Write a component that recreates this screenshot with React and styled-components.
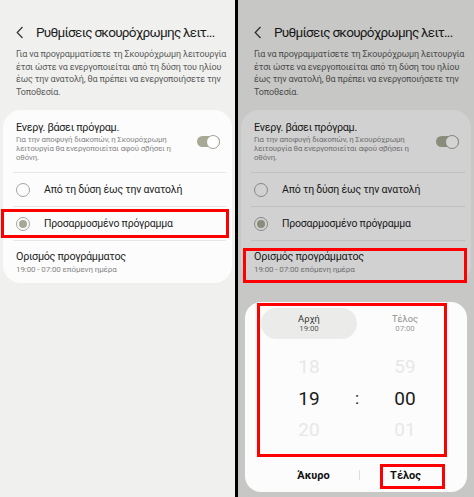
import React from "react";
import styled, { createGlobalStyle } from "styled-components";

const Global = createGlobalStyle`
  html, body { margin: 0; padding: 0; }
  body {
    width: 474px;
    height: 497px;
    overflow: hidden;
    background: #000;
    font-family: Roboto, "Noto Sans", "DejaVu Sans", sans-serif;
  }
`;

const Screen = styled.div`
  display: flex;
  gap: 3px;
  width: 474px;
  height: 497px;
  background: #000;
`;

const Phone = styled.div`
  position: relative;
  isolation: isolate;
  width: ${(p) => p.$w}px;
  flex: none;
  height: 100%;
  background: #f0f0ee;
  display: flex;
  flex-direction: column;
  overflow: hidden;
`;

const Scrim = styled.div`
  position: absolute;
  inset: 0;
  background: rgba(0, 0, 0, 0.17);
  z-index: 1;
`;

const Header = styled.div`
  display: flex;
  align-items: center;
  gap: 12px;
  height: 22px;
  margin: 21px 0 0 16px;
  svg { flex: none; }
`;

const Title = styled.h1`
  margin: 0;
  font-size: 13.6px;
  letter-spacing: -0.75px;
  font-weight: 400;
  color: #1e1e1e;
  white-space: nowrap;
`;

const Description = styled.p`
  margin: 5px 0 0 16px;
  font-size: 9px;
  letter-spacing: -0.15px;
  line-height: 12.5px;
  color: #5a5a5a;
  white-space: nowrap;
`;

const Card = styled.div`
  margin: 12px 3px 0;
  background: #fcfcfc;
  border-radius: 18px;
  padding-top: 11px;
`;

const TopRow = styled.div`
  display: flex;
  align-items: center;
  justify-content: space-between;
  padding: 0 12px 10px 13px;
`;

const TextCol = styled.div`
  display: flex;
  flex-direction: column;
`;

const ItemTitle = styled.div`
  font-size: 10.8px;
  letter-spacing: -0.3px;
  line-height: 14px;
  color: #1e1e1e;
  white-space: nowrap;
`;

const ItemSub = styled.div`
  font-size: ${(p) => p.$fs || 7.8}px;
  letter-spacing: -0.1px;
  line-height: ${(p) => p.$lh || 9}px;
  color: #858585;
  white-space: nowrap;
`;

const Toggle = styled.div`
  position: relative;
  width: 23px;
  height: 11px;
  border-radius: 6px;
  background: #a8aa96;
  flex: none;
`;

const Thumb = styled.div`
  position: absolute;
  right: 0;
  top: 50%;
  transform: translateY(-50%);
  width: 14px;
  height: 14px;
  box-sizing: border-box;
  border-radius: 50%;
  background: #fff;
  border: 1.6px solid #a2a492;
`;

const Divider = styled.div`
  height: 1px;
  background: #e7e7e5;
  margin: 0 6px 0 10px;
`;

const RadioRow = styled.div`
  position: relative;
  display: flex;
  align-items: center;
  gap: 14px;
  height: 33px;
  padding-left: 13px;
`;

const Radio = styled.div`
  width: 14px;
  height: 14px;
  box-sizing: border-box;
  border-radius: 50%;
  border: 1.4px solid #a3a3a3;
  display: flex;
  align-items: center;
  justify-content: center;
  flex: none;
  &::after {
    content: "";
    width: 8px;
    height: 8px;
    border-radius: 50%;
    background: ${(p) => (p.$on ? "#a6a895" : "transparent")};
  }
`;

const RadioLabel = styled.span`
  font-size: 10.5px;
  letter-spacing: -0.2px;
  color: #1e1e1e;
  white-space: nowrap;
`;

const ScheduleRow = styled.div`
  position: relative;
  padding: 9px 0 8px 13px;
  display: flex;
  flex-direction: column;
`;

const Highlight = styled.div`
  position: absolute;
  inset: ${(p) => p.$inset};
  border: 3px solid #ff0000;
  z-index: 3;
  pointer-events: none;
`;

const Sheet = styled.div`
  position: relative;
  z-index: 2;
  margin: 19px 7px 0;
  height: 190px;
  background: #fcfcfc;
  border-radius: 16px;
  display: flex;
  flex-direction: column;
`;

const PickerArea = styled.div`
  position: relative;
  padding-top: 6px;
  height: 144px;
`;

const Tabs = styled.div`
  display: grid;
  grid-template-columns: 96px 96px;
  padding-left: 16px;
`;

const Tab = styled.div`
  height: 31px;
  border-radius: 16px;
  background: ${(p) => (p.$active ? "#ebebe9" : "transparent")};
  display: flex;
  flex-direction: column;
  align-items: center;
  justify-content: center;
`;

const TabLabel = styled.div`
  font-size: 9.3px;
  line-height: 11px;
  color: ${(p) => (p.$active ? "#333" : "#8c8c8c")};
`;

const TabTime = styled.div`
  font-size: 7.8px;
  line-height: 10px;
  color: ${(p) => (p.$active ? "#555" : "#9a9a9a")};
`;

const Wheel = styled.div`
  display: grid;
  grid-template-columns: 88px 8px 88px;
  grid-auto-rows: 31.5px;
  padding-left: 20px;
  margin-top: 12px;
`;

const Num = styled.div`
  display: flex;
  align-items: center;
  justify-content: center;
  font-size: 19px;
  color: ${(p) => (p.$active ? "#1a1a1a" : "#e8e8e6")};
`;

const Colon = styled(Num)`
  font-size: 17px;
  color: #1a1a1a;
`;

const Buttons = styled.div`
  display: grid;
  grid-template-columns: 91px 1px 91px;
  align-items: center;
  padding-left: 23px;
  margin-top: 10px;
  height: 26px;
`;

const Btn = styled.div`
  position: relative;
  height: 100%;
  display: flex;
  align-items: center;
  justify-content: center;
  font-size: 11px;
  font-weight: 700;
  color: #111;
`;

const BtnSep = styled.div`
  width: 1px;
  height: 10px;
  background: #dcdcdc;
`;

const Chevron = () => (
  <svg width="8" height="13" viewBox="0 0 8 13" fill="none">
    <polyline points="6.5,1 1.2,6.5 6.5,12" stroke="#333" strokeWidth="1.2" />
  </svg>
);

function Settings({ showProgramBox, showScheduleBox }) {
  return (
    <>
      <Header>
        <Chevron />
        <Title>Ρυθμίσεις σκουρόχρωμης λειτ...</Title>
      </Header>
      <Description>
        Για να προγραμματίσετε τη Σκουρόχρωμη λειτουργία
        <br />
        έτσι ώστε να ενεργοποιείται από τη δύση του ηλίου
        <br />
        έως την ανατολή, θα πρέπει να ενεργοποιήσετε την
        <br />
        Τοποθεσία.
      </Description>
      <Card>
        <TopRow>
          <TextCol>
            <ItemTitle>Ενεργ. βάσει πρόγραμ.</ItemTitle>
            <ItemSub>
              Για την αποφυγή διακοπών, η Σκουρόχρωμη
              <br />
              λειτουργία θα ενεργοποιείται αφού σβήσει η
              <br />
              οθόνη.
            </ItemSub>
          </TextCol>
          <Toggle>
            <Thumb />
          </Toggle>
        </TopRow>
        <Divider />
        <RadioRow>
          <Radio />
          <RadioLabel>Από τη δύση έως την ανατολή</RadioLabel>
        </RadioRow>
        <Divider />
        <RadioRow>
          <Radio $on />
          <RadioLabel>Προσαρμοσμένο πρόγραμμα</RadioLabel>
          {showProgramBox && <Highlight $inset="2px 3px 2px -2px" />}
        </RadioRow>
        <Divider />
        <ScheduleRow>
          <ItemTitle>Ορισμός προγράμματος</ItemTitle>
          <ItemSub $lh={11} $fs={8}>19:00 - 07:00 επόμενη ημέρα</ItemSub>
          {showScheduleBox && <Highlight $inset="7px 4px 0 2px" />}
        </ScheduleRow>
      </Card>
    </>
  );
}

export default function App() {
  return (
    <>
      <Global />
      <Screen>
        <Phone $w={235}>
          <Settings showProgramBox />
        </Phone>
        <Phone $w={236}>
          <Settings showScheduleBox />
          <Scrim />
          <Sheet>
            <PickerArea>
              <Tabs>
                <Tab $active>
                  <TabLabel $active>Αρχή</TabLabel>
                  <TabTime $active>19:00</TabTime>
                </Tab>
                <Tab>
                  <TabLabel>Τέλος</TabLabel>
                  <TabTime>07:00</TabTime>
                </Tab>
              </Tabs>
              <Wheel>
                <Num>18</Num>
                <span />
                <Num>59</Num>
                <Num $active>19</Num>
                <Colon>:</Colon>
                <Num $active>00</Num>
                <Num>20</Num>
                <span />
                <Num>01</Num>
              </Wheel>
              <Highlight $inset="1px 20px -5px 12px" />
            </PickerArea>
            <Buttons>
              <Btn>Άκυρο</Btn>
              <BtnSep />
              <Btn>
                Τέλος
                <Highlight $inset="2px 6px -1px 20px" />
              </Btn>
            </Buttons>
          </Sheet>
        </Phone>
      </Screen>
    </>
  );
}
